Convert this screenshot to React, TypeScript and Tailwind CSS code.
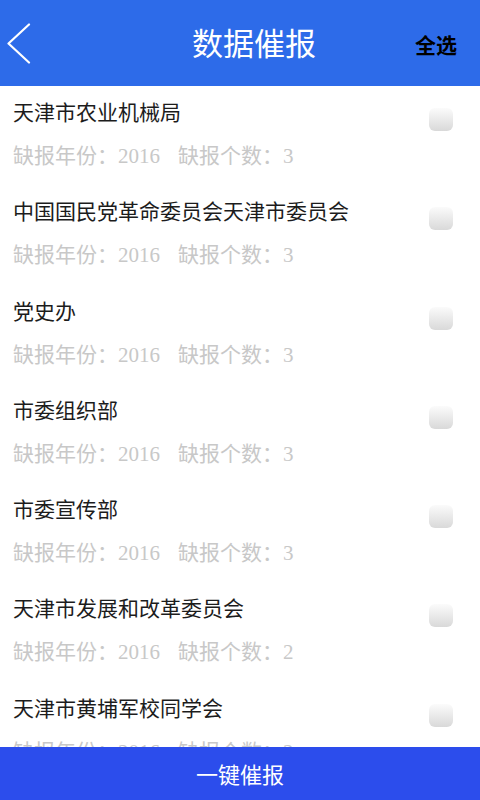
import React from "react";

interface Unit {
  name: string;
  year: number;
  count: number;
}

const UNITS: Unit[] = [
  { name: "天津市农业机械局", year: 2016, count: 3 },
  { name: "中国国民党革命委员会天津市委员会", year: 2016, count: 3 },
  { name: "党史办", year: 2016, count: 3 },
  { name: "市委组织部", year: 2016, count: 3 },
  { name: "市委宣传部", year: 2016, count: 3 },
  { name: "天津市发展和改革委员会", year: 2016, count: 2 },
  { name: "天津市黄埔军校同学会", year: 2016, count: 2 },
];

function UnitRow({ unit }: { unit: Unit }) {
  return (
    <div className="flex h-[99.3px] shrink-0 items-start justify-between pl-[13px] pr-[27px]">
      <div className="flex flex-col pt-[10px]">
        <span className="text-[21px] leading-[30px] text-[#1c1c1c]">{unit.name}</span>
        <span className="mt-[15px] whitespace-nowrap font-['Liberation_Serif','Noto_Sans_CJK_SC',serif] text-[21px] leading-[30px] text-[#c8c8c8]">
          缺报年份：{unit.year}
          <span className="ml-[18px]">缺报个数：{unit.count}</span>
        </span>
      </div>
      <div className="mt-[22px] h-[23px] w-[24px] shrink-0 rounded-[6px] bg-gradient-to-b from-[#fbfbfb] to-[#d9d9d9]" />
    </div>
  );
}

export default function App() {
  return (
    <div className="relative flex h-[800px] w-full flex-col overflow-hidden bg-white font-['Noto_Sans_CJK_SC','Noto_Sans',sans-serif]">
      <header className="relative flex h-[86px] shrink-0 items-center justify-center bg-[#2d6be9]">
        <svg
          className="absolute left-[6px] top-[23px]"
          width="26"
          height="41"
          viewBox="0 0 26 41"
          fill="none"
          stroke="white"
          strokeWidth="2.2"
          strokeLinecap="round"
          strokeLinejoin="round"
        >
          <path d="M23 1.5 L2.5 20.5 L23 39.5" />
        </svg>
        <span className="mb-[4px] ml-[28px] text-[31px] leading-none text-white">数据催报</span>
        <span className="absolute right-[23px] top-[31px] text-[21px] font-bold leading-[26px] text-black">全选</span>
      </header>

      <div className="flex flex-col">
        {UNITS.map((u) => (
          <UnitRow key={u.name} unit={u} />
        ))}
      </div>

      <button className="absolute bottom-0 left-0 flex h-[53px] w-full items-center justify-center bg-[#2c4dec] text-[22px] text-white">
        一键催报
      </button>
    </div>
  );
}
